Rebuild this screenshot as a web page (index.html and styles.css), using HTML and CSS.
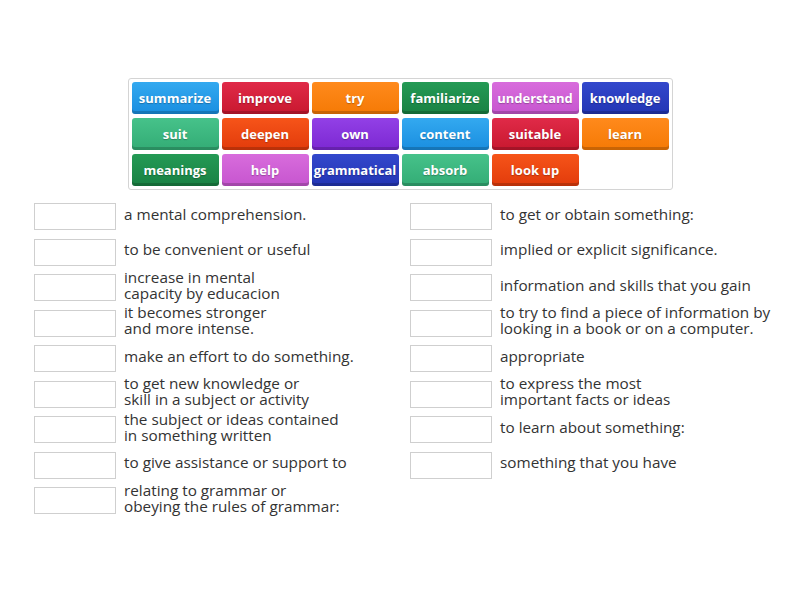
FILE: index.html
```html
<!doctype html>
<html>
    <head>
        <meta charset="utf-8">
        <link rel="stylesheet" href="styles.css">
    </head>
    <body>
      <div class="bank">
        <div class="tile blue">summarize</div>
        <div class="tile crimson">improve</div>
        <div class="tile orange">try</div>
        <div class="tile green">familiarize</div>
        <div class="tile pink">understand</div>
        <div class="tile navy">knowledge</div>
        <div class="tile teal">suit</div>
        <div class="tile red">deepen</div>
        <div class="tile purple">own</div>
        <div class="tile blue">content</div>
        <div class="tile crimson">suitable</div>
        <div class="tile orange">learn</div>
        <div class="tile green">meanings</div>
        <div class="tile pink">help</div>
        <div class="tile navy">grammatical</div>
        <div class="tile teal">absorb</div>
        <div class="tile red">look up</div>
      </div>

      <div class="board">
        <div class="col">
          <div class="row"><span class="slot"></span><span class="def">a mental comprehension.</span></div>
          <div class="row"><span class="slot"></span><span class="def">to be convenient or useful</span></div>
          <div class="row"><span class="slot"></span><span class="def">increase in mental<br>capacity by educacion</span></div>
          <div class="row"><span class="slot"></span><span class="def">it becomes stronger<br>and more intense.</span></div>
          <div class="row"><span class="slot"></span><span class="def">make an effort to do something.</span></div>
          <div class="row"><span class="slot"></span><span class="def">to get new knowledge or<br>skill in a subject or activity</span></div>
          <div class="row"><span class="slot"></span><span class="def">the subject or ideas contained<br>in something written</span></div>
          <div class="row"><span class="slot"></span><span class="def">to give assistance or support to</span></div>
          <div class="row"><span class="slot"></span><span class="def">relating to grammar or<br>obeying the rules of grammar:</span></div>
        </div>
        <div class="col">
          <div class="row"><span class="slot"></span><span class="def">to get or obtain something:</span></div>
          <div class="row"><span class="slot"></span><span class="def">implied or explicit significance.</span></div>
          <div class="row"><span class="slot"></span><span class="def">information and skills that you gain</span></div>
          <div class="row"><span class="slot"></span><span class="def">to try to find a piece of information by<br>looking in a book or on a computer.</span></div>
          <div class="row"><span class="slot"></span><span class="def">appropriate</span></div>
          <div class="row"><span class="slot"></span><span class="def">to express the most<br>important facts or ideas</span></div>
          <div class="row"><span class="slot"></span><span class="def">to learn about something:</span></div>
          <div class="row"><span class="slot"></span><span class="def">something that you have</span></div>
        </div>
      </div>
    </body>
</html>
```

FILE: styles.css
```css
html,body{margin:0;background:#fff;}
body{min-height:600px;font-family:"Open Sans",sans-serif;color:#333;}

/* word bank */
.bank {
  width: 537px;
  margin: 78px auto 0;
  padding: 3px;
  border: 1px solid #d4d4d4;
  border-radius: 3px;
  display: grid;
  grid-template-columns: repeat(6, 87px);
  grid-auto-rows: 32px;
  gap: 4px 3px;
}

.tile {
  display: flex;
  align-items: center;
  justify-content: center;
  border-radius: 3px;
  color: #fff;
  font-weight: bold;
  font-size: 13px;
  text-shadow: 0 1px 1px rgba(0,0,0,0.25);
  box-shadow: inset 0 -3px 0 rgba(0,0,0,0.18);
  white-space: nowrap;
}

.blue    { background: linear-gradient(#33a9f0, #1a8ee0); }
.crimson { background: linear-gradient(#e02a48, #c8182f); }
.orange  { background: linear-gradient(#ff8a1c, #f57a05); }
.green   { background: linear-gradient(#249a55, #198143); }
.pink    { background: linear-gradient(#d86cdc, #c655cf); }
.navy    { background: linear-gradient(#3348cc, #2335b4); }
.teal    { background: linear-gradient(#46c28a, #33ac75); }
.red     { background: linear-gradient(#f65419, #e23b0b); }
.purple  { background: linear-gradient(#9240e6, #7c28d2); }

/* definitions */
.board {
  display: flex;
  gap: 8px;
  margin: 9px 0 0 34px;
}

.col {
  width: 368px;
  display: flex;
  flex-direction: column;
}

.row {
  display: flex;
  align-items: center;
  height: 35.5px;
}

.slot {
  flex: none;
  width: 80px;
  height: 25px;
  border: 1px solid #cfcfcf;
  background: #fff;
}

.def {
  margin-left: 8px;
  padding-bottom: 6px;
  font-size: 15.3px;
  line-height: 16px;
  white-space: nowrap;
}
```
